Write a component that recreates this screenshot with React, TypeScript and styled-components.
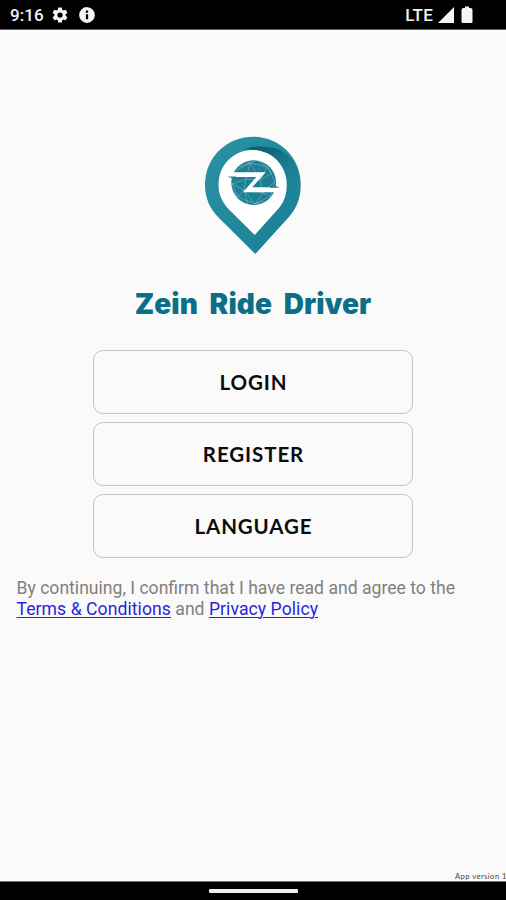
import React from "react";
import styled, { createGlobalStyle } from "styled-components";

const GlobalStyle = createGlobalStyle`
  *, *::before, *::after { box-sizing: border-box; }
  body { margin: 0; background: #fafafa; }
`;

const Screen = styled.div`
  width: 506px;
  height: 900px;
  display: flex;
  flex-direction: column;
  background: #fafafa;
  overflow: hidden;
`;

const StatusBar = styled.header`
  height: 30px;
  flex: none;
  display: flex;
  align-items: center;
  padding: 1px 30px 0 10px;
  background: #000;
  border-bottom: 1px solid #626262;
  color: #f2f2f2;
  font: 500 17px/28px Roboto, sans-serif;
`;

const Clock = styled.span`
  width: 41px;
  letter-spacing: 0.1px;
`;

const Network = styled.span`
  margin-left: auto;
  margin-right: 4px;
  letter-spacing: 0.2px;
`;

const StatusIcon = styled.svg<{ $gap?: number }>`
  width: 18px;
  height: 18px;
  flex: none;
  margin-left: ${(p) => p.$gap ?? 0}px;
  fill: #f5f5f5;
`;

const Content = styled.main`
  flex: 1;
  display: flex;
  flex-direction: column;
  align-items: center;
  padding-top: 104px;
`;

const Logo = styled.svg`
  width: 104px;
  height: 124px;
  flex: none;
  display: block;
`;

const Title = styled.h1`
  margin: 25px 0 0;
  height: 42px;
  font: 900 28px/42px Inter, sans-serif;
  letter-spacing: 0.1px;
  word-spacing: 6px;
  color: #0b6f87;
  white-space: nowrap;
`;

const Actions = styled.nav`
  width: 320px;
  margin-top: 25px;
  display: flex;
  flex-direction: column;
  gap: 8px;
`;

const ActionButton = styled.button`
  height: 64px;
  padding: 0;
  border: 1.5px solid #c2c2c2;
  border-radius: 10px;
  background: #fafafa;
  color: #0c0c0c;
  font: 700 20.5px/24px Lato, sans-serif;
  letter-spacing: 0.9px;
  text-indent: 1px;
`;

const Terms = styled.p`
  align-self: stretch;
  margin: 20px 0 0;
  padding-left: 16.5px;
  font: 400 17.6px/20.5px Roboto, sans-serif;
  color: #808080;
  white-space: nowrap;
`;

const TermsLink = styled.a`
  color: #2a1fe0;
  letter-spacing: 0.06px;
  text-decoration: underline;
  text-decoration-thickness: 1px;
  text-underline-offset: 2px;
`;

const Version = styled.div`
  width: 51px;
  margin-top: auto;
  align-self: flex-end;
  overflow: hidden;
  white-space: nowrap;
  font: 400 7.6px/10px Lato, sans-serif;
  letter-spacing: 0.45px;
  color: #444;
`;

const NavigationBar = styled.footer`
  height: 19px;
  flex: none;
  display: flex;
  justify-content: center;
  align-items: center;
  background: #000;
  border-top: 1px solid #777;
`;

const HomeIndicator = styled.div`
  width: 89px;
  height: 4px;
  border-radius: 1px;
  background: #f2eeee;
`;

const actions = ["LOGIN", "REGISTER", "LANGUAGE"];

function BrandPin() {
  return (
    <Logo viewBox="201 134 104 124" role="img" aria-label="Zein Ride">
      <defs>
        <linearGradient id="pin" x1="0" y1="0" x2="1" y2="1">
          <stop offset="0" stopColor="#2c91a5" />
          <stop offset="1" stopColor="#187f94" />
        </linearGradient>
        <linearGradient id="shade" x1="0" y1="0" x2="0.8" y2="1">
          <stop offset="0" stopColor="#085c6e" />
          <stop offset="0.3" stopColor="#10697c" />
          <stop offset="0.8" stopColor="#187f94" stopOpacity="0" />
        </linearGradient>
        <clipPath id="globe">
          <circle cx="253.7" cy="182.6" r="22.4" />
        </clipPath>
      </defs>
      <path
        d="M253 136.7C226 136.7 205 158 205 184.5C205 199 210 209 219 218L255.3 254L288 218C297 208 300.7 198 300.7 184.5C300.7 158 280 136.7 253 136.7Z"
        fill="url(#pin)"
      />
      <path
        d="M245 149C255 145.5 268 146 278 149C292 156 300.7 170 300.7 185C300.7 198 297 208 288 218L280 227L275 207C286 195 288 185 286.5 177C283 160 269 150 245 149Z"
        fill="url(#shade)"
      />
      <path
        d="M252.5 150C233 150 218.5 165.5 218.5 184.5C218.5 194 221.5 201 228 208.5L254.7 235L279 208C284.5 201 286.7 194 286.7 184.5C286.7 165.5 271.5 150 252.5 150Z"
        fill="#fff"
      />
      <circle cx="253.7" cy="182.6" r="22.4" fill="#1c7f94" />
      <g clipPath="url(#globe)" fill="none" stroke="#8cc0ca" strokeWidth="0.5">
        <path d="M235 171L250 163L267 167L275 181L271 196L255 204L238 197L232 184L244 190L255 204L263 193L275 181M250 163L257 160L267 167L272 173L260 180L250 163L239 167M232 184L246 179L244 190L238 197M246 179L260 180L263 193L244 190M263 193L271 196M241 160L250 163L246 179M267 167L260 180M244 190L248 205M232 190L238 197M255 204L263 201" />
      </g>
      <path
        d="M228 172.3H265.7L252.3 187.2H278V192.3H243L256.3 176.9H231Z"
        fill="#fff"
      />
      <path d="M227.7 176.5H236V178.5H232.5Z" fill="#287f90" />
      <path d="M270 187.7H279.5L276 186H270Z" fill="#287f90" />
    </Logo>
  );
}

export default function App() {
  return (
    <>
      <GlobalStyle />
      <Screen>
        <StatusBar>
          <Clock>9:16</Clock>
          <StatusIcon viewBox="0 0 24 24">
            <path d="M19.43 12.98c.04-.32.07-.64.07-.98s-.03-.66-.07-.98l2.11-1.65a.5.5 0 0 0 .12-.64l-2-3.46a.5.5 0 0 0-.61-.22l-2.49 1a7.3 7.3 0 0 0-1.69-.98l-.38-2.65A.49.49 0 0 0 14 2h-4a.49.49 0 0 0-.49.42l-.38 2.65c-.61.25-1.17.59-1.69.98l-2.49-1a.49.49 0 0 0-.61.22l-2 3.46a.49.49 0 0 0 .12.64l2.11 1.65a7.9 7.9 0 0 0 0 1.96l-2.11 1.65a.5.5 0 0 0-.12.64l2 3.46c.12.22.39.3.61.22l2.49-1c.52.4 1.08.73 1.69.98l.38 2.65c.03.24.24.42.49.42h4c.25 0 .46-.18.49-.42l.38-2.65c.61-.25 1.17-.59 1.69-.98l2.49 1c.23.09.49 0 .61-.22l2-3.46a.5.5 0 0 0-.12-.64zM12 15.5a3.5 3.5 0 1 1 0-7 3.5 3.5 0 0 1 0 7z" />
          </StatusIcon>
          <StatusIcon $gap={9} viewBox="0 0 24 24">
            <path d="M12 1.5a10.5 10.5 0 1 0 0 21 10.5 10.5 0 0 0 0-21zm1.5 16h-3V11h3zm0-8.5h-3V6h3z" />
          </StatusIcon>
          <Network>LTE</Network>
          <StatusIcon viewBox="0 0 18 18">
            <path d="M1 17L17 1V17Z" />
          </StatusIcon>
          <StatusIcon $gap={3} viewBox="0 0 18 18">
            <path d="M7 0.5h4v1.5h1.5Q14.5 2 14.5 4V15.5Q14.5 17 13 17H5Q3.500 17 3.5 15.5V4Q3.5 2 5.5 2H7Z" />
          </StatusIcon>
        </StatusBar>
        <Content>
          <BrandPin />
          <Title>Zein Ride Driver</Title>
          <Actions>
            {actions.map((label) => (
              <ActionButton key={label}>{label}</ActionButton>
            ))}
          </Actions>
          <Terms>
            By continuing, I confirm that I have read and agree to the
            <br />
            <TermsLink>Terms &amp; Conditions</TermsLink> and{" "}
            <TermsLink>Privacy Policy</TermsLink>
          </Terms>
          <Version>App version 1</Version>
        </Content>
        <NavigationBar>
          <HomeIndicator />
        </NavigationBar>
      </Screen>
    </>
  );
}
